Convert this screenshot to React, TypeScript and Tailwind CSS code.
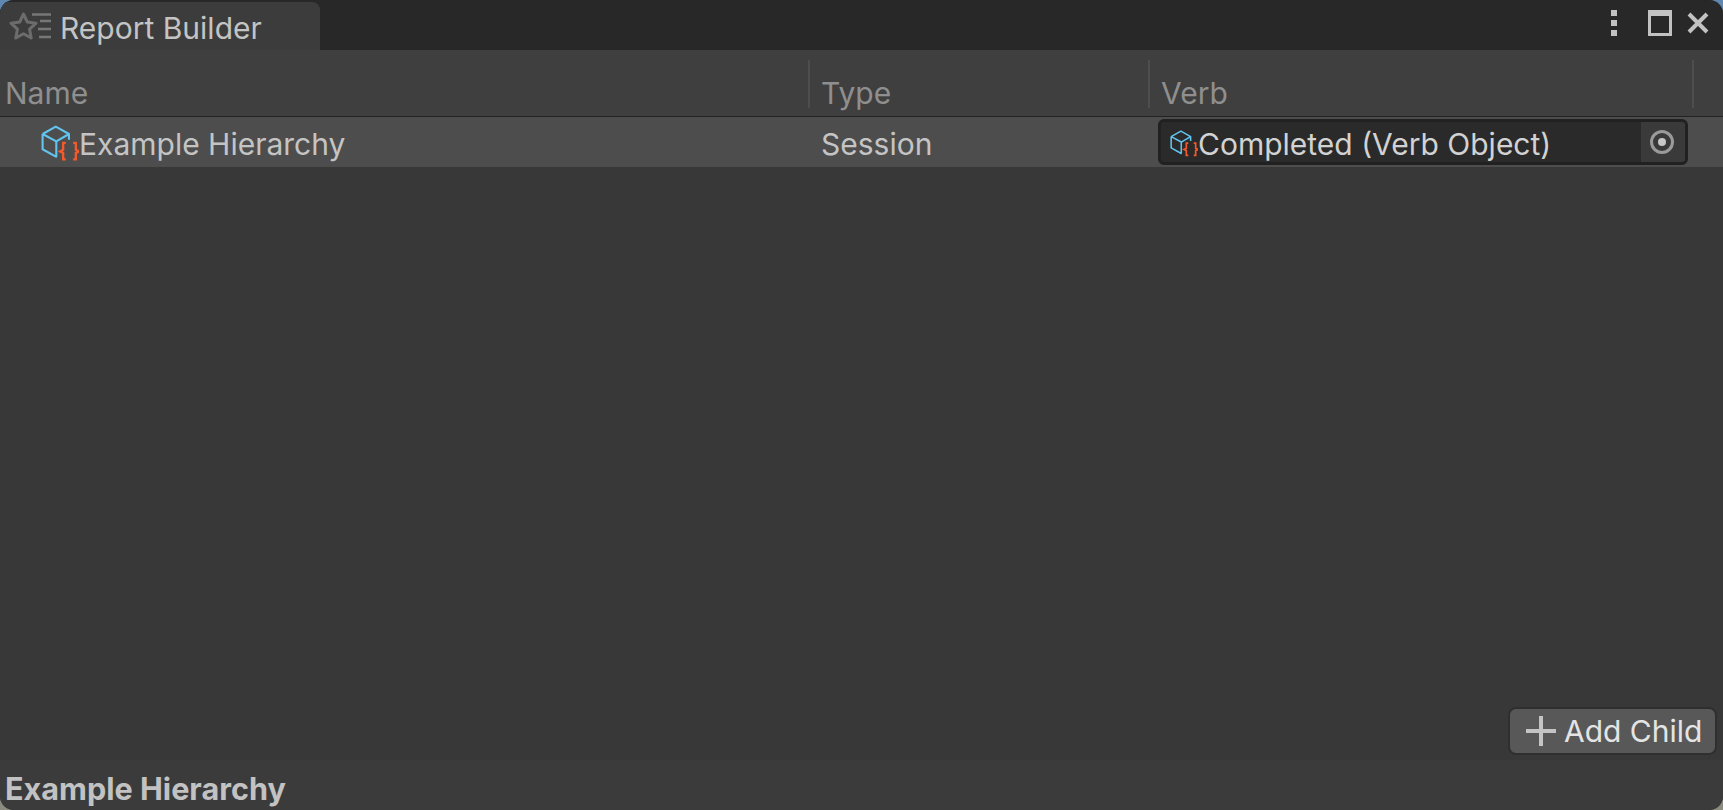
const FONT = "font-['Inter',sans-serif]";

function CubeIcon({ size, className }: { size: number; className: string }) {
  return (
    <svg width={size} height={size * (34 / 36)} viewBox="0 0 36 34" fill="none" className={`shrink-0 ${className}`}>
      <path d="M1.5 8.5 L14 1.5 L26.5 8.5 V14 M1.5 8.5 V23 L15 30.5 M1.5 8.5 L14.5 15.5 L26.5 8.5 M14.5 15.5 V30" stroke="#62c4ee" strokeWidth="2" strokeLinejoin="round" />
      <path d="M23.5 17 H21 V23.5 L18 25 L21 26.5 V32.5 H23.5" stroke="#f4592c" strokeWidth="2.2" />
      <path d="M30.5 17 H33 V23.5 L36 25 L33 26.5 V32.5 H30.5" stroke="#f4592c" strokeWidth="2.2" />
    </svg>
  );
}

function StarListIcon() {
  return (
    <svg width="44" height="30" viewBox="0 0 44 30" fill="none" className="shrink-0">
      <path d="M14.5 3 L18.3 11 L27 12.2 L20.6 18.2 L22.2 27 L14.5 22.8 L6.8 27 L8.4 18.2 L2 12.2 L10.7 11 Z" stroke="#6c6c6c" strokeWidth="3" strokeLinejoin="round" />
      <path d="M23 3.5 H42 M31 10 H42 M29 18 H42 M30 26 H42" stroke="#777777" strokeWidth="2.4" />
    </svg>
  );
}

function HeaderCell({ label, className }: { label: string; className: string }) {
  return (
    <div className={`flex items-end border-r-2 border-[#4e4e4e] ${className}`}>
      <span className="mb-[-4px] text-[30px] leading-[38px] text-[#8f8f8f]">{label}</span>
    </div>
  );
}

export default function App() {
  return (
    <div className="h-[810px] w-[1723px] bg-gradient-to-b from-[#5f87b0] via-[#4a4a4a] to-[#8c8c80]">
      <div className={`flex h-[810px] w-[1723px] flex-col overflow-hidden rounded-[14px] bg-[#383838] ${FONT}`}>
        {/* tab strip */}
        <div className="flex h-[50px] shrink-0 items-end justify-between bg-[#282828]">
          <div className="flex h-[48px] w-[320px] items-center gap-[7px] rounded-t-[8px] bg-[#3c3c3c] pl-[9px]">
            <StarListIcon />
            <span className="pt-[3px] text-[30px] leading-[36px] text-[#c4c4c4]">Report Builder</span>
          </div>
          <div className="flex h-full items-center pr-[14px] pb-[4px]">
            <svg width="10" height="26" viewBox="0 0 10 26" className="mr-[29px] shrink-0">
              <path d="M2 0 H8 V6 H2 Z M2 10 H8 V16 H2 Z M2 20 H8 V26 H2 Z" fill="#c2c2c2" />
            </svg>
            <svg width="24" height="26" viewBox="0 0 24 26" fill="none" className="mr-[15px] shrink-0">
              <path d="M1.5 1 H22.5 V24.5 H1.5 Z" stroke="#c2c2c2" strokeWidth="3" />
              <path d="M0 0 H24 V6 H0 Z" fill="#c2c2c2" />
            </svg>
            <svg width="22" height="22" viewBox="0 0 22 22" fill="none" className="shrink-0">
              <path d="M2 2 L20 20 M20 2 L2 20" stroke="#c2c2c2" strokeWidth="4" />
            </svg>
          </div>
        </div>

        {/* column header */}
        <div className="flex h-[67px] shrink-0 border-b border-[#232323] bg-[#3f3f3f] pt-[10px] pb-[8px]">
          <HeaderCell label="Name" className="w-[810px] pl-[5px]" />
          <HeaderCell label="Type" className="w-[340px] pl-[11px]" />
          <HeaderCell label="Verb" className="w-[544px] pl-[11px]" />
        </div>

        {/* row */}
        <div className="flex h-[50px] shrink-0 items-center bg-[#4d4d4d]">
          <div className="flex w-[810px] items-center pl-[41px]">
            <CubeIcon size={38} className="mt-[2px]" />
            <span className="pt-[3px] text-[30px] leading-[36px] text-[#c4c4c4]">Example Hierarchy</span>
          </div>
          <div className="w-[340px] pt-[3px] pl-[11px] text-[30px] leading-[36px] text-[#c4c4c4]">Session</div>
          <div className="ml-[8px] flex h-[46px] w-[530px] items-stretch overflow-hidden rounded-[6px] border-[3px] border-[#212121] bg-[#2a2a2a]">
            <div className="flex flex-1 items-center pl-[9px]">
              <CubeIcon size={28} className="mt-[3px]" />
              <span className="pt-[3px] text-[30px] leading-[36px] text-[#d2d2d2]">Completed (Verb Object)</span>
            </div>
            <div className="flex w-[44px] items-center justify-center bg-[#3a3a3a] pr-[2px]">
              <svg width="26" height="26" viewBox="0 0 26 26" fill="none">
                <circle cx="13" cy="13" r="10.5" stroke="#9a9a9a" strokeWidth="3" />
                <circle cx="13" cy="13" r="4" fill="#c8c8c8" />
              </svg>
            </div>
          </div>
        </div>

        {/* body */}
        <div className="flex flex-1 items-end justify-end pr-[6px] pb-[5px]">
          <div className="flex h-[48px] w-[209px] items-center gap-[8px] rounded-[8px] border-2 border-[#2f2f2f] bg-[#585858] pl-[16px]">
            <svg width="30" height="30" viewBox="0 0 30 30" className="shrink-0">
              <path d="M0 13 H13 V0 H17 V13 H30 V17 H17 V30 H13 V17 H0 Z" fill="#c4c4c4" />
            </svg>
            <span className="text-[30px] leading-[36px] text-[#e4e4e4]">Add Child</span>
          </div>
        </div>

        {/* footer */}
        <div className="flex h-[50px] shrink-0 items-center bg-[#3b3b3b] pt-[8px] pl-[5px]">
          <span className="text-[30.6px] font-bold leading-[36px] text-[#c2c2c2]">Example Hierarchy</span>
        </div>
      </div>
    </div>
  );
}
